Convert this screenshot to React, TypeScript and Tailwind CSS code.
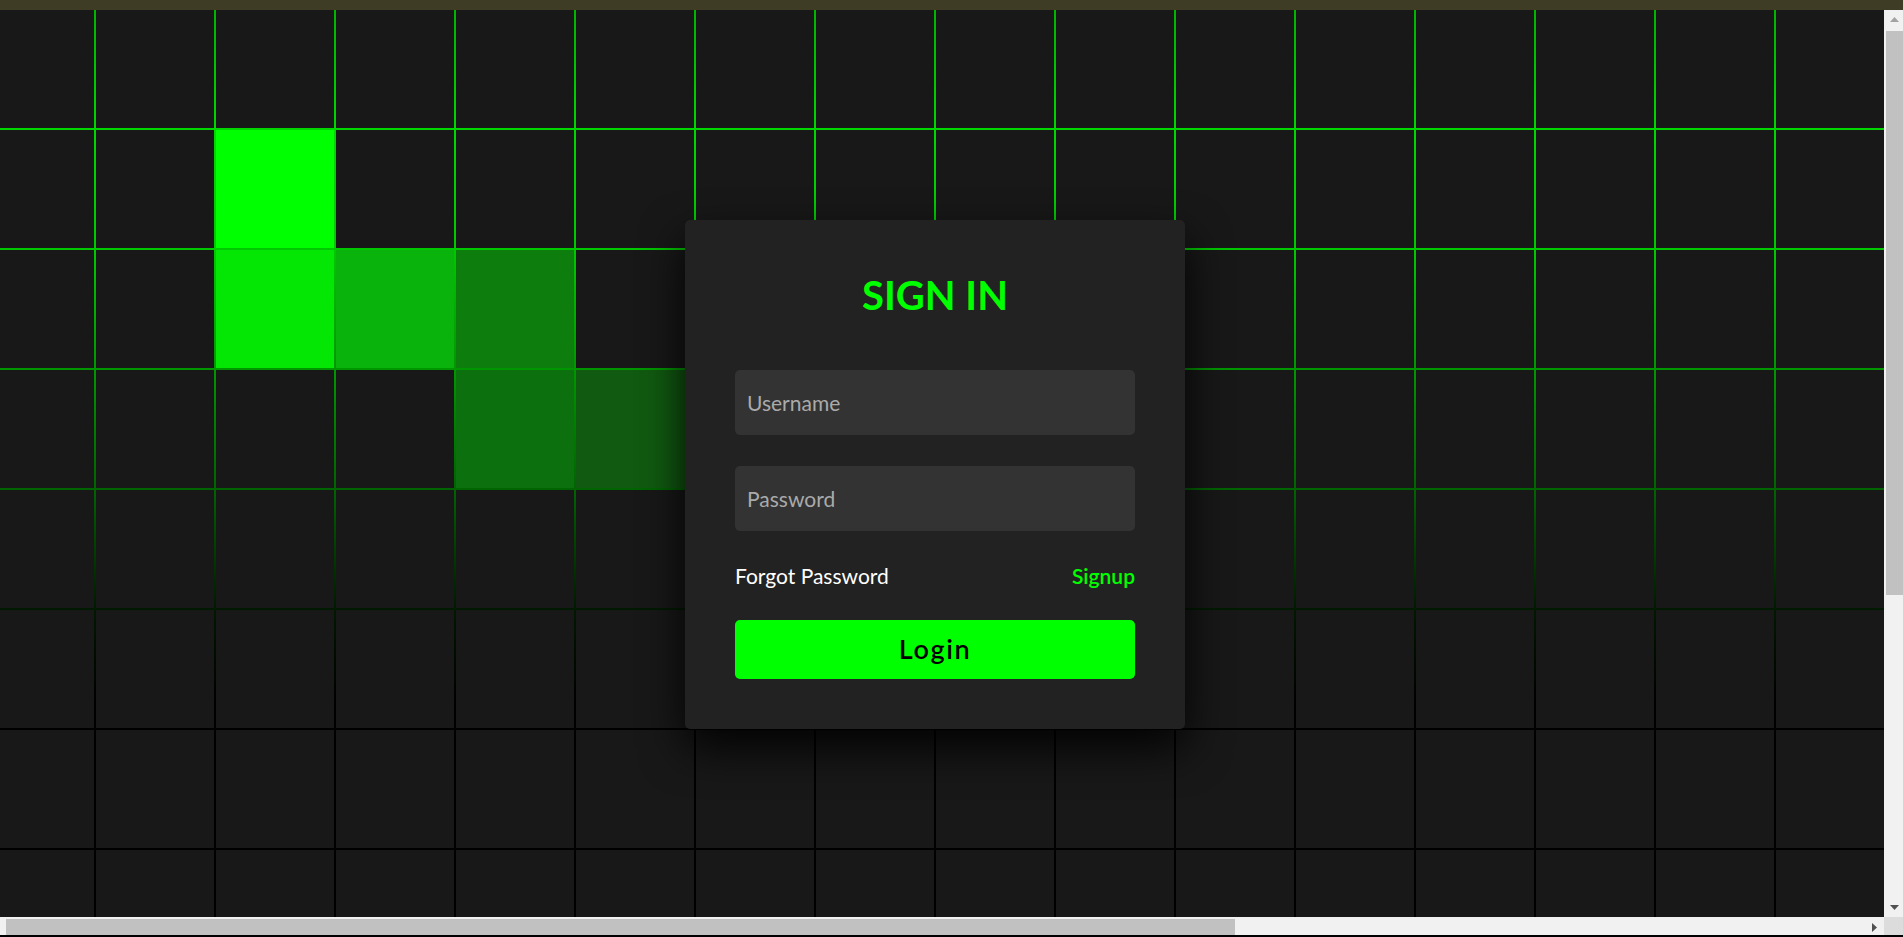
import React from "react";

const highlight: Record<string, string> = {
  "1-2": "bg-[#00ff00]",
  "2-2": "bg-[#04e604]",
  "2-3": "bg-[#0ab30b]",
  "2-4": "bg-[#0d7e0e]",
  "3-4": "bg-[#0c700e]",
  "3-5": "bg-[#115a11]",
};

function Cells() {
  const out: React.ReactNode[] = [];
  for (let r = 0; r < 8; r++) {
    for (let c = 0; c < 17; c++) {
      const cls = highlight[`${r}-${c}`] ?? "bg-[#181818]";
      out.push(<span key={`${r}-${c}`} className={`block h-[118px] w-[118px] ${cls}`} />);
    }
  }
  return <>{out}</>;
}

function SignIn() {
  return (
    <div className="absolute left-[685px] top-[210px] z-10 flex w-[500px] flex-col items-center gap-[50px] rounded-[5px] bg-[#222222] p-[50px] shadow-[0_19px_44px_rgba(0,0,0,0.9)]">
      <h2 className="text-[40px] leading-[50px] font-bold text-[#00ff00]">SIGN IN</h2>
      <div className="flex w-full flex-col gap-[31px]">
        <input
          placeholder="Username"
          className="h-[65px] w-full rounded-[5px] bg-[#333333] px-[12px] text-[21px] text-white outline-none placeholder:text-[#aaaaaa]"
        />
        <input
          type="password"
          placeholder="Password"
          className="h-[65px] w-full rounded-[5px] bg-[#333333] px-[12px] text-[21px] text-white outline-none placeholder:text-[#aaaaaa]"
        />
        <div className="flex h-[27px] items-center justify-between text-[21px] leading-[27px]">
          <a className="text-white">Forgot Password</a>
          <a className="font-semibold text-[#00ff00]">Signup</a>
        </div>
        <button className="flex h-[59px] w-full items-center justify-center rounded-[5px] bg-[#00ff00] text-[27px] font-semibold tracking-[1.6px] text-black">
          Login
        </button>
      </div>
    </div>
  );
}

export default function App() {
  return (
    <div className="flex h-[937px] w-[1903px] flex-col overflow-hidden bg-black [font-family:Lato,sans-serif]">
      <div className="h-[10px] w-full shrink-0 bg-[#3e3c24]" />
      <div className="flex h-[907px] shrink-0">
        <div className="relative h-full w-[1884px] overflow-hidden bg-[linear-gradient(to_bottom,#00b400_0px,#00d700_120px,#00c800_240px,#009600_360px,#006400_480px,#001900_600px,#000000_690px,#000000_100%)]">
          <div className="-ml-[24px] grid grid-cols-[repeat(17,118px)] gap-[2px]">
            <Cells />
          </div>
          <SignIn />
        </div>
        <div className="flex h-full w-[19px] flex-col bg-[#f1f1f1]">
          <div className="flex h-[19px] shrink-0 items-center justify-center pl-[2px]">
            <svg width="9" height="5" viewBox="0 0 9 5"><polygon points="0,5 4.5,0 9,5" fill="#a3a3a3" /></svg>
          </div>
          <div className="ml-[2px] mt-[2px] h-[564px] shrink-0 bg-[#c1c1c1]" />
          <div className="flex-1" />
          <div className="flex h-[19px] shrink-0 items-center justify-center pl-[2px]">
            <svg width="9" height="5" viewBox="0 0 9 5"><polygon points="0,0 9,0 4.5,5" fill="#505050" /></svg>
          </div>
        </div>
      </div>
      <div className="flex h-[18px] shrink-0">
        <div className="flex w-[1884px] bg-[#f1f1f1]">
          <div className="ml-[6px] mt-[2px] h-[16px] w-[1229px] bg-[#c1c1c1]" />
          <div className="flex-1" />
          <div className="flex w-[20px] items-center justify-center pt-[2px]">
            <svg width="5" height="9" viewBox="0 0 5 9"><polygon points="0,0 5,4.5 0,9" fill="#505050" /></svg>
          </div>
        </div>
        <div className="w-[19px] bg-[#dcdcdc]" />
      </div>
    </div>
  );
}
